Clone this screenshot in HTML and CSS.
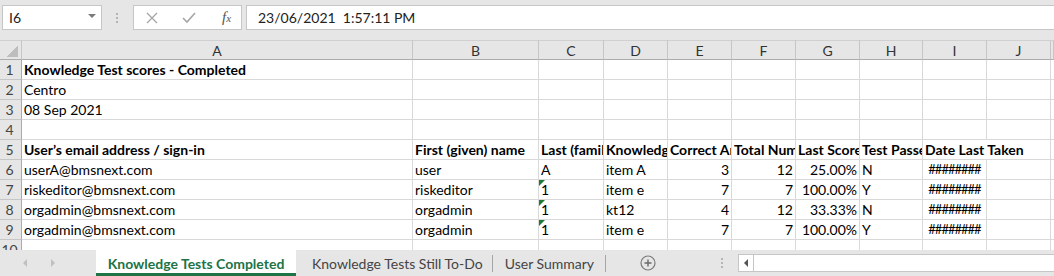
FILE: index.html
```html
<!DOCTYPE html>
<html lang="en">
<head>
    <meta charset="UTF-8">
    <title>Knowledge Test scores</title>
    <link rel="stylesheet" href="styles.css">
</head>
<body>
    <!-- Formula bar -->
    <div class="formula-bar">
        <div class="name-box">
            <span>I6</span>
            <span class="caret"></span>
        </div>
        <div class="grip"></div>
        <div class="fx-buttons">
            <svg class="fx-icon cancel" width="12" height="12" viewBox="0 0 12 12"><path d="M1 1 L11 11 M11 1 L1 11" stroke="#a6a6a6" stroke-width="1.3" fill="none"/></svg>
            <svg class="fx-icon enter" width="14" height="12" viewBox="0 0 14 12"><path d="M1 6 L5 10 L13 1" stroke="#a6a6a6" stroke-width="1.6" fill="none"/></svg>
            <span class="fx-label">f<small>x</small></span>
        </div>
        <div class="formula-input">23/06/2021&nbsp; 1:57:11 PM</div>
    </div>

    <!-- Sheet grid -->
    <div class="sheet">
        <div class="grid">
            <div class="corner"><span class="corner-tri"></span></div>
            <div class="col-head">A</div>
            <div class="col-head">B</div>
            <div class="col-head">C</div>
            <div class="col-head">D</div>
            <div class="col-head">E</div>
            <div class="col-head">F</div>
            <div class="col-head">G</div>
            <div class="col-head">H</div>
            <div class="col-head">I</div>
            <div class="col-head">J</div>
            <div class="col-head"></div>

            <div class="row-head">1</div>
            <div class="cell bold">Knowledge Test scores - Completed</div>
            <div class="cell"></div><div class="cell"></div><div class="cell"></div><div class="cell"></div><div class="cell"></div><div class="cell"></div><div class="cell"></div><div class="cell"></div><div class="cell"></div><div class="cell"></div>

            <div class="row-head">2</div>
            <div class="cell">Centro</div>
            <div class="cell"></div><div class="cell"></div><div class="cell"></div><div class="cell"></div><div class="cell"></div><div class="cell"></div><div class="cell"></div><div class="cell"></div><div class="cell"></div><div class="cell"></div>

            <div class="row-head">3</div>
            <div class="cell">08 Sep 2021</div>
            <div class="cell"></div><div class="cell"></div><div class="cell"></div><div class="cell"></div><div class="cell"></div><div class="cell"></div><div class="cell"></div><div class="cell"></div><div class="cell"></div><div class="cell"></div>

            <div class="row-head">4</div>
            <div class="cell"></div>
            <div class="cell"></div><div class="cell"></div><div class="cell"></div><div class="cell"></div><div class="cell"></div><div class="cell"></div><div class="cell"></div><div class="cell"></div><div class="cell"></div><div class="cell"></div>

            <div class="row-head">5</div>
            <div class="cell bold">User’s email address / sign-in</div>
            <div class="cell bold">First (given) name</div>
            <div class="cell bold">Last (family) name</div>
            <div class="cell bold">Knowledge Test</div>
            <div class="cell bold">Correct Answers</div>
            <div class="cell bold">Total Number</div>
            <div class="cell bold">Last Score</div>
            <div class="cell bold">Test Passed</div>
            <div class="cell bold span-2">Date Last Taken</div>
            <div class="cell"></div>

            <div class="row-head">6</div>
            <div class="cell">userA@bmsnext.com</div>
            <div class="cell">user</div>
            <div class="cell">A</div>
            <div class="cell">item A</div>
            <div class="cell num">3</div>
            <div class="cell num">12</div>
            <div class="cell num">25.00%</div>
            <div class="cell">N</div>
            <div class="cell hash">########</div>
            <div class="cell"></div>
            <div class="cell"></div>

            <div class="row-head">7</div>
            <div class="cell">riskeditor@bmsnext.com</div>
            <div class="cell">riskeditor</div>
            <div class="cell flagged">1</div>
            <div class="cell">item e</div>
            <div class="cell num">7</div>
            <div class="cell num">7</div>
            <div class="cell num">100.00%</div>
            <div class="cell">Y</div>
            <div class="cell hash">########</div>
            <div class="cell"></div>
            <div class="cell"></div>

            <div class="row-head">8</div>
            <div class="cell">orgadmin@bmsnext.com</div>
            <div class="cell">orgadmin</div>
            <div class="cell flagged">1</div>
            <div class="cell">kt12</div>
            <div class="cell num">4</div>
            <div class="cell num">12</div>
            <div class="cell num">33.33%</div>
            <div class="cell">N</div>
            <div class="cell hash">########</div>
            <div class="cell"></div>
            <div class="cell"></div>

            <div class="row-head">9</div>
            <div class="cell">orgadmin@bmsnext.com</div>
            <div class="cell">orgadmin</div>
            <div class="cell flagged">1</div>
            <div class="cell">item e</div>
            <div class="cell num">7</div>
            <div class="cell num">7</div>
            <div class="cell num">100.00%</div>
            <div class="cell">Y</div>
            <div class="cell hash">########</div>
            <div class="cell"></div>
            <div class="cell"></div>

            <div class="row-head">10</div>
            <div class="cell"></div>
            <div class="cell"></div><div class="cell"></div><div class="cell"></div><div class="cell"></div><div class="cell"></div><div class="cell"></div><div class="cell"></div><div class="cell"></div><div class="cell"></div><div class="cell"></div>
        </div>
    </div>

    <!-- Sheet tabs -->
    <div class="tab-bar">
        <div class="tab-nav">
            <span class="nav-arrow left"></span>
            <span class="nav-arrow right"></span>
        </div>
        <div class="tab active">Knowledge Tests Completed</div>
        <div class="tab first">Knowledge Tests Still To-Do</div>
        <span class="tab-sep"></span>
        <div class="tab">User Summary</div>
        <span class="tab-sep"></span>
        <svg class="add-sheet" width="16" height="16" viewBox="0 0 16 16">
            <circle cx="8" cy="8" r="7" stroke="#7a7a7a" stroke-width="1.2" fill="none"/>
            <path d="M8 4.5 V11.5 M4.5 8 H11.5" stroke="#6a6a6a" stroke-width="1.4"/>
        </svg>
        <div class="grip tab-grip"></div>
        <div class="hscroll">
            <span class="hscroll-btn"><span class="hscroll-arrow"></span></span>
        </div>
    </div>
</body>
</html>
```

FILE: styles.css
```css
body {
    margin: 0;
    width: 1054px;
    height: 276px;
    overflow: hidden;
    background-color: #e6e6e6;
    font-family: Lato, "Liberation Sans", sans-serif;
    font-size: 14px;
    color: #000;
}

/* formula bar */
.formula-bar {
    height: 40px;
    box-sizing: border-box;
    padding-top: 5px;
    display: flex;
    align-items: flex-start;
}
.name-box {
    margin-left: 2px;
    width: 100px;
    height: 25px;
    box-sizing: border-box;
    border: 1px solid #c6c6c6;
    background-color: #fff;
    display: flex;
    align-items: center;
    justify-content: space-between;
    padding: 0 5px 0 6px;
    color: #222;
}
.caret {
    width: 0;
    height: 0;
    border-left: 4px solid transparent;
    border-right: 4px solid transparent;
    border-top: 4px solid #7a7a7a;
    margin-top: -3px;
}
.grip {
    width: 2px;
    height: 11px;
    background: linear-gradient(#b4b4b4 50%, transparent 50%);
    background-size: 2px 4px;
}
.formula-bar .grip {
    margin: 8px 0 0 14px;
}
.fx-buttons {
    margin-left: 15px;
    width: 109px;
    height: 25px;
    box-sizing: border-box;
    border: 1px solid #c6c6c6;
    background-color: #fff;
    display: flex;
    align-items: center;
}
.fx-icon.cancel {
    margin-left: 12px;
}
.fx-icon.enter {
    margin-left: 24px;
}
.fx-label {
    margin-left: 26px;
    font-family: "Liberation Serif", serif;
    font-style: italic;
    font-size: 15px;
    color: #555;
}
.fx-label small {
    font-size: 11px;
}
.formula-input {
    margin-left: 4px;
    flex: 1;
    height: 25px;
    box-sizing: border-box;
    border: 1px solid #c6c6c6;
    border-right: none;
    background-color: #fff;
    padding-left: 11px;
    line-height: 23px;
    color: #222;
}

/* sheet */
.sheet {
    height: 210px;
    overflow: hidden;
    background-color: #fff;
}
.grid {
    display: grid;
    grid-template-columns: 22px 391px 126px 65px 64px 64px 64px 64px 63px 64px 64px 3px;
    grid-auto-rows: 20px;
}
.grid > div {
    box-sizing: border-box;
    border-right: 1px solid #d9d9d9;
    border-bottom: 1px solid #d9d9d9;
    white-space: nowrap;
    overflow: hidden;
    line-height: 19px;
}
.corner {
    background-color: #e6e6e6;
    border-top: 1px solid #d0d0d0;
    display: flex;
    align-items: flex-end;
    justify-content: flex-end;
    padding: 0 3px 2px 0;
}
.grid > .corner,
.grid > .col-head {
    border-bottom-color: #ababab;
    border-right-color: #c6c6c6;
}
.corner-tri {
    width: 12px;
    height: 11px;
    background: linear-gradient(to bottom right, transparent 50%, #bdbdbd 50%);
}
.col-head {
    background-color: #e6e6e6;
    border-top: 1px solid #d0d0d0;
    text-align: center;
    color: #333;
}
.grid > .row-head {
    background-color: #e6e6e6;
    border-right-color: #ababab;
    border-bottom-color: #c6c6c6;
    color: #444;
    text-align: center;
    padding-right: 2px;
}
.cell {
    padding: 0 2px;
}
.bold {
    font-weight: bold;
}
.span-2 {
    grid-column: span 2;
}
.num {
    text-align: right;
}
.hash {
    text-align: center;
    font-size: 13px;
    letter-spacing: -1px;
}
.flagged {
    position: relative;
}
.flagged::before {
    content: "";
    position: absolute;
    top: 0;
    left: 0;
    border-top: 6px solid #1e7b34;
    border-right: 6px solid transparent;
}

/* tabs */
.tab-bar {
    height: 26px;
    display: flex;
    align-items: stretch;
    background-color: #e6e6e6;
    color: #444;
}
.tab-nav {
    width: 96px;
    display: flex;
    align-items: center;
}
.nav-arrow {
    width: 0;
    height: 0;
    border-top: 4px solid transparent;
    border-bottom: 4px solid transparent;
}
.nav-arrow.left {
    margin-left: 23px;
    border-right: 4px solid #c0c0c0;
}
.nav-arrow.right {
    margin-left: 24px;
    border-left: 4px solid #c0c0c0;
}
.tab {
    display: flex;
    align-items: center;
    padding: 0 11px 0 12px;
}
.tab.first {
    padding-left: 16px;
    padding-right: 9px;
}
.tab.active {
    width: 200px;
    box-sizing: border-box;
    justify-content: center;
    padding: 3px 0 0;
    background-color: #fff;
    color: #217346;
    font-weight: bold;
    border-bottom: 3px solid #217346;
}
.tab-sep {
    align-self: center;
    width: 1px;
    height: 17px;
    background-color: #a6a6a6;
}
.add-sheet {
    align-self: center;
    margin-left: 34px;
}
.tab-grip {
    align-self: center;
    margin-left: 65px;
}
.hscroll {
    align-self: center;
    margin-left: 15px;
    flex: 1;
    height: 18px;
    box-sizing: border-box;
    border: 1px solid #c6c6c6;
    border-right: none;
    background-color: #fff;
    display: flex;
}
.hscroll-btn {
    width: 14px;
    border-right: 1px solid #c6c6c6;
    display: flex;
    align-items: center;
    justify-content: center;
}
.hscroll-arrow {
    width: 0;
    height: 0;
    border-top: 4px solid transparent;
    border-bottom: 4px solid transparent;
    border-right: 4px solid #555;
}
```
